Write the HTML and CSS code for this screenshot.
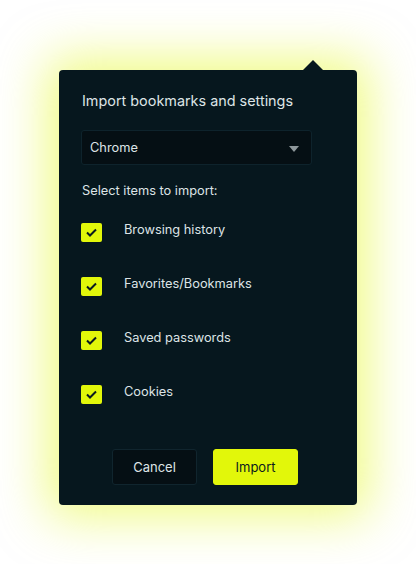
FILE: index.html
```html
<!DOCTYPE html>
<html lang="en">
<head>
  <meta charset="UTF-8">
  <meta name="viewport" content="width=device-width, initial-scale=1.0">
  <title>Import bookmarks</title>
  <link rel="stylesheet" href="styles.css">
</head>
<body>
  <div class="panel">
    <div class="title">Import bookmarks and settings</div>
    <div class="select">
      <span>Chrome</span>
      <svg class="caret" viewBox="0 0 10 6"><path d="M0 0h10L5 6z"/></svg>
    </div>
    <div class="hint">Select items to import:</div>
    <ul class="items">
      <li class="item">
        <span class="check"><svg viewBox="0 0 21 19"><path d="M6 9.5l3 3 6-6"/></svg></span>
        <span class="label">Browsing history</span>
      </li>
      <li class="item">
        <span class="check"><svg viewBox="0 0 21 19"><path d="M6 9.5l3 3 6-6"/></svg></span>
        <span class="label">Favorites/Bookmarks</span>
      </li>
      <li class="item">
        <span class="check"><svg viewBox="0 0 21 19"><path d="M6 9.5l3 3 6-6"/></svg></span>
        <span class="label">Saved passwords</span>
      </li>
      <li class="item">
        <span class="check"><svg viewBox="0 0 21 19"><path d="M6 9.5l3 3 6-6"/></svg></span>
        <span class="label">Cookies</span>
      </li>
    </ul>
    <div class="actions">
      <button class="btn btn-cancel">Cancel</button>
      <button class="btn btn-import">Import</button>
    </div>
  </div>
</body>
</html>
```

FILE: styles.css
```css
body {
  margin: 0;
  height: 564px;
  background: #ffffff;
  font-family: 'Inter', 'Noto Sans', sans-serif;
  overflow: hidden;
}
.panel {
  position: relative;
  box-sizing: border-box;
  margin: 70px 0 0 59px;
  width: 298px;
  height: 435px;
  padding: 22px 45px 20px 22px;
  background: #06171e;
  border-radius: 4px;
  box-shadow: 0 0 50px 12px rgba(226, 247, 10, 0.5);
  color: #dde4e6;
}
/* petite flèche au-dessus du panneau */
.panel::before {
  content: '';
  position: absolute;
  top: -10px;
  left: 244px;
  border-left: 10px solid transparent;
  border-right: 10px solid transparent;
  border-bottom: 10px solid #06171e;
}
.title {
  font-size: 14.4px;
  line-height: 18px;
  padding-left: 1px;
}
.select {
  margin-top: 20px;
  height: 35px;
  box-sizing: border-box;
  display: flex;
  align-items: center;
  justify-content: space-between;
  padding: 0 12px 0 8px;
  background: #050f14;
  border: 1px solid #0e232c;
  border-radius: 3px;
  font-size: 12.8px;
}
.caret { width: 10px; height: 6px; fill: #8d979b; margin-top: 2px; }
.hint {
  margin-top: 17px;
  font-size: 12.8px;
  line-height: 18px;
  padding-left: 1px;
}
.items {
  list-style: none;
  margin: 5px 0 0;
  padding: 0;
}
.item {
  height: 54px;
  display: flex;
  align-items: center;
  gap: 22px;
}
.check {
  width: 21px;
  height: 19px;
  background: #e2f70a;
  border-radius: 2px;
  display: flex;
}
.check svg {
  width: 21px;
  height: 19px;
  fill: none;
  stroke: #0a1a1f;
  stroke-width: 2;
}
.label {
  font-size: 12.8px;
  line-height: 18px;
  margin-bottom: 4px;
}
.actions {
  margin-top: 28px;
  padding-left: 31px;
  display: flex;
  gap: 16px;
}
.btn {
  width: 85px;
  height: 36px;
  border-radius: 3px;
  font-family: inherit;
  font-size: 13px;
  cursor: pointer;
}
.btn-cancel {
  background: #050f14;
  border: 1px solid #10252e;
  color: #dde4e6;
}
.btn-import {
  background: #e2f70a;
  border: 1px solid #e2f70a;
  color: #0a1a1f;
}
```
